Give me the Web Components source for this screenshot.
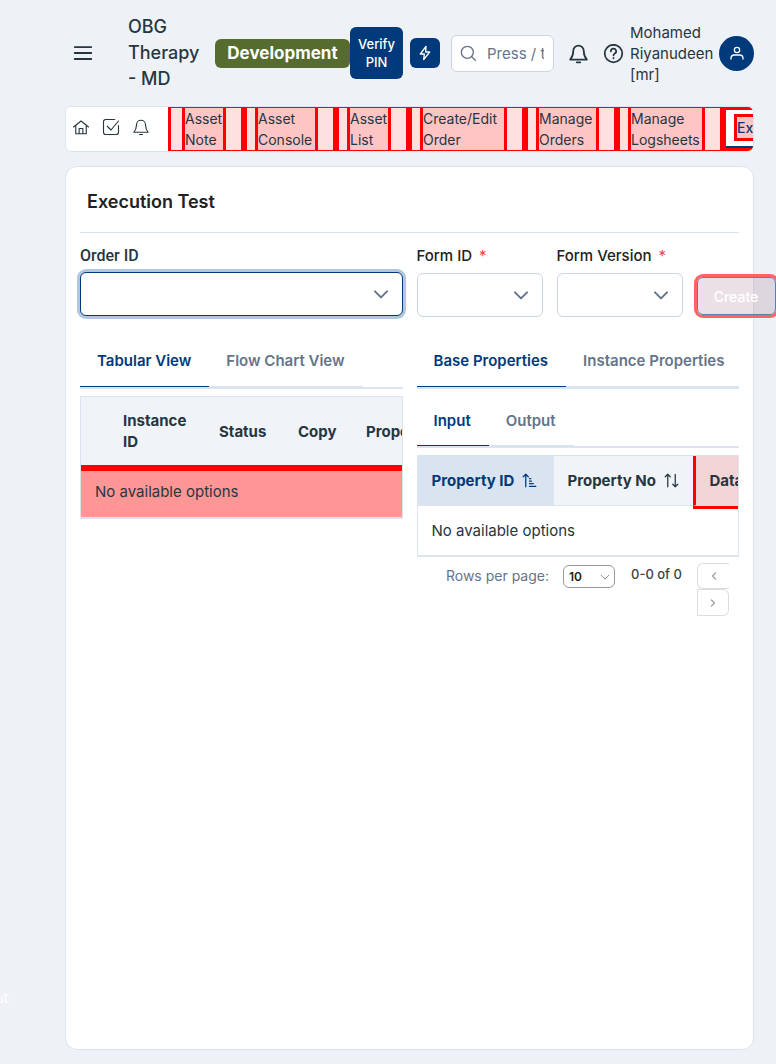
<!DOCTYPE html>
<html lang="en">
<head>
<meta charset="utf-8">
<meta name="viewport" content="width=device-width, initial-scale=1">
<title>Execution Test</title>
<style>
  html, body { margin: 0; }
  body {
    background: #eef2f7;
    color: #263640;
    font: 14px/21px Inter, "Open Sans", sans-serif;
    overflow-x: hidden;
  }
</style>
</head>
<body>
<app-shell>
  <side-drawer slot="drawer"></side-drawer>
  <app-header slot="header" app-title="OBG Therapy - MD" env="Development" user="Mohamed Riyanudeen [mr]"></app-header>
  <nav-bar slot="nav">
    <nav-tab style="--w: 38px" class="first">Asset Note</nav-tab>
    <nav-tab style="--w: 57px">Asset Console</nav-tab>
    <nav-tab style="--w: 38px">Asset List</nav-tab>
    <nav-tab style="--w: 81px">Create/Edit Order</nav-tab>
    <nav-tab style="--w: 57px">Manage Orders</nav-tab>
    <nav-tab style="--w: 71px">Manage Logsheets</nav-tab>
    <nav-tab style="--w: 110px" active>Execution Test</nav-tab>
  </nav-bar>
  <page-card heading="Execution Test">
    <div slot="left">
      <field-select label="Order ID" plain focused></field-select>
    </div>
    <form-row slot="right"></form-row>
    <div slot="left-body">
      <tab-strip tabs="Tabular View|Flow Chart View"></tab-strip>
      <instance-table></instance-table>
    </div>
    <div slot="right-body">
      <tab-strip tabs="Base Properties|Instance Properties"></tab-strip>
      <tab-strip tabs="Input|Output" compact></tab-strip>
      <property-table></property-table>
      <page-controls></page-controls>
    </div>
  </page-card>
</app-shell>

<script>
const ICONS = {
  menu: '<path d="M3 5.500h18M3 12h18M3 18.500h18"/>',
  home: '<path d="M2 12 12 4l10 8M5 10v11h14V10M9.500 21v-7h5v7"/>',
  check: '<path d="M22 10v9a3 3 0 0 1-3 3H5a3 3 0 0 1-3-3V5a3 3 0 0 1 3-3h12M7 11l5 5L22 4"/>',
  bell: '<path d="M12 3a6 6 0 0 0-6 6c0 5-1.500 7.500-3.500 10h19C19.500 16.500 18 14 18 9a6 6 0 0 0-6-6zM10 22h4"/>',
  bolt: '<path d="M13.500 2 5 13.500h6L10 22l9-11.500h-6z"/>',
  search: '<circle cx="11" cy="11" r="9"/><path d="m18 18 5 5"/>',
  help: '<circle cx="12" cy="12" r="10"/><path d="M9 9.500a3 3 0 1 1 4.500 2.500c-1 .6-1.500 1-1.500 2M12 17v.5"/>',
  user: '<circle cx="12" cy="7.500" r="4"/><path d="M3 21v-1c0-3 2-5 5-5h8c3 0 5 2 5 5v1"/>',
  down: '<path d="m3 8 9 9 9-9"/>',
  left: '<path d="m15 6-6 6 6 6"/>',
  right: '<path d="m9 6 6 6-6 6"/>',
  sort: '<path d="M6 22V2M2 6l4-4 4 4M18 2v20M14 18l4 4 4-4"/>',
  sorted: '<path d="M6 22V2M2 6l4-4 4 4M12 9h2M12 13h3M12 17h6M12 21.500h10"/>'
};

// base class: every element renders its markup into an open shadow root
class BaseElement extends HTMLElement {
  constructor() {
    super();
    this.attachShadow({ mode: 'open' });
  }
  connectedCallback() {
    this.shadowRoot.innerHTML = `<style>
      *, :host { box-sizing: border-box; }
      :host { display: block; }
      button, input, select { font: inherit; color: inherit; margin: 0; }
    </style>` + this.render();
  }
}

customElements.define('ui-icon', class extends BaseElement {
  render() {
    return `
      <style>
        :host { display: block; flex: none; width: var(--size, 20px); height: var(--size, 20px); }
        svg { display: block; width: 100%; height: 100%; fill: none; stroke: currentColor; stroke-linecap: round; stroke-linejoin: round; stroke-width: var(--stroke, 2); }
      </style>
      <svg viewBox="0 0 24 24" aria-hidden="true">${ICONS[this.getAttribute('name')]}</svg>`;
  }
});

customElements.define('app-shell', class extends BaseElement {
  render() {
    return `
      <style>
        :host { display: flex; flex-direction: column; min-height: 100vh; padding: 0 22px 14px 65px; position: relative; overflow: hidden; }
        .nav { margin-bottom: 14px; }
        .page { flex: 1; display: grid; }
      </style>
      <slot name="drawer"></slot>
      <slot name="header"></slot>
      <div class="nav"><slot name="nav"></slot></div>
      <main class="page"><slot></slot></main>`;
  }
});

// collapsed drawer, only its right edge is on screen
customElements.define('side-drawer', class extends BaseElement {
  render() {
    return `
      <style>
        :host { position: absolute; right: 100%; bottom: 55px; margin-right: -8px; }
        a { color: #fff; text-decoration: none; font-size: 13px; }
      </style>
      <a href="#">Logout</a>`;
  }
});

customElements.define('app-header', class extends BaseElement {
  render() {
    return `
      <style>
        :host { display: flex; align-items: center; height: 106px; font-size: 15px; }
        button { border: 0; padding: 0; background: none; display: grid; place-items: center; flex: none; }
        .menu { width: 36px; height: 36px; margin-right: 27px; }
        h1 { flex: none; width: 73px; margin: 0 14px 0 0; font-size: 18px; line-height: 26px; font-weight: 500; }
        .env { flex: none; width: 135px; background: #556b2f; color: #fff; border-radius: 6px; text-align: center; font-size: 17px; font-weight: 700; line-height: 29px; }
        .pin { width: 53px; height: 52px; background: #003a7a; color: #fff; border-radius: 6px; font-size: 13px; font-weight: 500; line-height: 18px; }
        .bolt { width: 30px; height: 30px; margin: 0 11px 0 7px; background: #003a7a; color: #fff; border-radius: 6px; }
        .search { flex: 1; min-width: 0; display: flex; align-items: center; height: 37px; padding: 0 9px 0 8px; border: 1px solid #cbd5e1; border-radius: 6px; background: #fff; color: #64748b; }
        input { flex: 1; min-width: 0; width: 0; padding: 0; margin-left: 11px; border: 0; background: none; outline: 0; }
        input::placeholder { color: #64748b; opacity: 1; }
        .bell { margin-left: 14px; }
        .help { margin-left: 14px; }
        .user { flex: none; width: 82px; margin: 0 7px 0 6px; }
        .avatar { width: 35px; height: 35px; border-radius: 50%; background: #003a7a; color: #fff; }
      </style>
      <button class="menu" aria-label="Menu"><ui-icon name="menu" style="--size: 22px"></ui-icon></button>
      <h1>${this.getAttribute('app-title')}</h1>
      <span class="env">${this.getAttribute('env')}</span>
      <button class="pin">Verify<br>PIN</button>
      <button class="bolt" aria-label="Quick actions"><ui-icon name="bolt" style="--size: 16px"></ui-icon></button>
      <label class="search">
        <ui-icon name="search" style="--size: 16px"></ui-icon>
        <input type="text" aria-label="Search" placeholder="Press / to search">
      </label>
      <button class="bell" aria-label="Notifications"><ui-icon name="bell" style="--size: 21px"></ui-icon></button>
      <button class="help" aria-label="Help"><ui-icon name="help" style="--size: 21px"></ui-icon></button>
      <span class="user">${this.getAttribute('user')}</span>
      <button class="avatar" aria-label="Account"><ui-icon name="user" style="--size: 16px"></ui-icon></button>`;
  }
});

customElements.define('nav-bar', class extends BaseElement {
  render() {
    return `
      <style>
        :host { display: flex; height: 46px; border: 1px solid #dce5ef; border-radius: 6px; background: #fff; overflow: hidden; }
        .icons { flex: none; display: flex; gap: 12px; padding: 11px 18px 0 6px; }
        button { border: 0; padding: 0; width: 18px; height: 18px; background: none; }
        .tabs { display: flex; align-items: center; flex: 1; min-width: 0; overflow: hidden; }
      </style>
      <div class="icons">
        <button aria-label="Home"><ui-icon name="home" style="--size: 18px; --stroke: 1.500"></ui-icon></button>
        <button aria-label="Tasks"><ui-icon name="check" style="--size: 18px; --stroke: 1.500"></ui-icon></button>
        <button aria-label="Alerts"><ui-icon name="bell" style="--size: 18px; --stroke: 1.500"></ui-icon></button>
      </div>
      <nav class="tabs"><slot></slot></nav>`;
  }
});

customElements.define('nav-tab', class extends BaseElement {
  render() {
    return `
      <style>
        :host { flex: none; display: block; height: 44px; padding: 0 15px 0 8px; border: solid #f00; border-width: 1px 3px; background: #ffe0e0; }
        :host(.first) { padding-left: 11px; }
        a { display: block; box-sizing: content-box; width: var(--w); height: 42px; border: solid #f00; border-width: 0 3px; background: #ffc5c5; color: inherit; text-decoration: none; }
        :host([active]) { padding-top: 4px; border-width: 3px; background: linear-gradient(#003a7a, #003a7a) 0 100% / 100% 2px no-repeat #fff; }
        :host([active]) a { height: 21px; border-width: 3px; color: #003a7a; font-weight: 500; }
      </style>
      <a href="#"><slot></slot></a>`;
  }
});

customElements.define('page-card', class extends BaseElement {
  render() {
    return `
      <style>
        :host { border: 1px solid #dce5ef; border-radius: 12px; background: #fff; padding: 14px; min-width: 0; }
        h2 { margin: 0; padding: 8px 7px 17px; border-bottom: 1px solid #dce5ef; font-size: 18px; line-height: 26px; font-weight: 600; color: #212121; }
        .grid { display: grid; grid-template-columns: minmax(0, 1fr) minmax(0, 1fr); column-gap: 14px; row-gap: 18px; padding-top: 12px; }
        ::slotted(*) { min-width: 0; }
      </style>
      <h2>${this.getAttribute('heading')}</h2>
      <div class="grid">
        <slot name="left"></slot>
        <slot name="right"></slot>
        <slot name="left-body"></slot>
        <slot name="right-body"></slot>
      </div>`;
  }
});

customElements.define('field-select', class extends BaseElement {
  render() {
    const required = this.hasAttribute('required') ? '<span class="req">*</span>' : '';
    return `
      <style>
        :host { min-width: 0; }
        label { display: block; height: 21px; margin-bottom: 7px; font-size: 15px; font-weight: 500; color: #212121; white-space: nowrap; }
        :host([plain]) label { font: 500 16px/21px Roboto, sans-serif; color: #263640; margin-bottom: 6px; }
        .req { color: #f44336; margin-left: 7px; font-weight: 400; }
        .box { display: grid; align-items: center; height: 44px; color: #64748b; }
        select, ui-icon { grid-area: 1 / 1; }
        select { width: 100%; height: 44px; padding: 0 30px 0 12px; appearance: none; background: #fff; border: 1px solid #cbd5e1; border-radius: 6px; outline: 0; }
        ui-icon { justify-self: end; margin-right: 14px; pointer-events: none; z-index: 1; }
        :host([focused]) select { border-color: #003a7a; box-shadow: 0 0 0 3px #b2c7de; }
      </style>
      <label for="field">${this.getAttribute('label')}${required}</label>
      <div class="box">
        <select id="field"><option></option></select>
        <ui-icon name="down" style="--size: 16px; --stroke: 3"></ui-icon>
      </div>`;
  }
});

customElements.define('form-row', class extends BaseElement {
  render() {
    return `
      <style>
        :host { display: flex; gap: 14px; align-items: flex-start; }
        field-select { flex: none; width: 126px; }
        button { flex: none; width: 79px; height: 38px; margin-top: 32px; padding: 0; border: 1px solid #5781ab; border-radius: 6px; background: rgba(174, 134, 154, .26); box-shadow: 0 0 0 3px #ff6464; color: #fff; font-weight: 500; }
      </style>
      <field-select label="Form ID" required></field-select>
      <field-select label="Form Version" required></field-select>
      <button disabled>Create</button>`;
  }
});

customElements.define('tab-strip', class extends BaseElement {
  render() {
    const tabs = this.getAttribute('tabs').split('|');
    return `
      <style>
        :host { height: 54px; border-bottom: 2px solid #dae4f0; margin-bottom: 7px; overflow: hidden; }
        :host([compact]) { height: 52px; }
        .list { display: flex; }
        button { flex: none; padding: 0 18px 0 17px; height: 52px; border: 0; border-bottom: 1px solid #dae4f0; background: none; color: #64748b; font-size: 15px; font-weight: 600; }
        :host([compact]) button { height: 50px; }
        button[aria-selected=true] { color: #003a7a; border-bottom-color: #003a7a; }
      </style>
      <div class="list" role="tablist">
        ${tabs.map((tab, i) => `<button role="tab" aria-selected="${i === 0}">${tab}</button>`).join('')}
      </div>`;
  }
});

const TABLE_CSS = `
  :host { border: 1px solid #dce5ef; border-bottom-width: 2px; overflow: hidden; }
  table { table-layout: fixed; border-collapse: separate; border-spacing: 0; font-size: 15px; }
  th, td { padding: 0 14px; text-align: left; }
  th { background: #f0f4f9; font-weight: 700; }
`;

customElements.define('instance-table', class extends BaseElement {
  render() {
    return `
      <style>
        ${TABLE_CSS}
        table { width: 400px; }
        th { height: 68px; }
        td { height: 52px; padding-bottom: 5px; border-top: 6px solid #f00; background: #ff9696; }
      </style>
      <table>
        <colgroup><col style="width: 28px"><col style="width: 96px"><col style="width: 79px"><col style="width: 68px"><col></colgroup>
        <thead><tr><th></th><th>Instance ID</th><th>Status</th><th>Copy</th><th>Properties</th></tr></thead>
        <tbody><tr><td colspan="5">No available options</td></tr></tbody>
      </table>`;
  }
});

customElements.define('property-table', class extends BaseElement {
  render() {
    return `
      <style>
        ${TABLE_CSS}
        table { width: 420px; }
        th { height: 50px; border-bottom: 1px solid #dce5ef; white-space: nowrap; }
        td { height: 49px; }
        th div { display: flex; align-items: center; gap: 8px; }
        .sorted { background: #dae4f0; color: #003a7a; border-bottom-color: #dae4f0; }
        .marked { background: #f3d5d8; border-left: 3px solid #f00; border-bottom-color: #f3d5d8; box-shadow: 0 3px 0 #f00; }
      </style>
      <table>
        <colgroup><col style="width: 136px"><col style="width: 139px"><col></colgroup>
        <thead><tr>
          <th class="sorted" aria-sort="ascending"><div>Property ID <ui-icon name="sorted" style="--size: 15px"></ui-icon></div></th>
          <th><div>Property No <ui-icon name="sort" style="--size: 15px"></ui-icon></div></th>
          <th class="marked">Data Type</th>
        </tr></thead>
        <tbody><tr><td colspan="3">No available options</td></tr></tbody>
      </table>`;
  }
});

customElements.define('page-controls', class extends BaseElement {
  render() {
    return `
      <style>
        :host { display: flex; justify-content: flex-end; padding: 6px 10px 0 0; }
        label { margin: 2px 14px 0 0; color: #64748b; }
        .size { display: grid; align-items: center; align-self: flex-start; width: 52px; margin: 2px 16px 0 0; }
        select, .size ui-icon { grid-area: 1 / 1; }
        select { height: 23px; padding: 0 5px; appearance: none; border: 1px solid #999; border-radius: 6px; background: #fff; color: #212121; font-size: 12px; font-weight: 600; }
        .size ui-icon { justify-self: end; margin-right: 5px; pointer-events: none; z-index: 1; color: #777; }
        .range { width: 50px; margin: 1px 16px 0 0; font-size: 13px; font-weight: 500; white-space: nowrap; color: #424242; }
        .buttons { display: grid; }
        button { display: grid; place-items: center; width: 32px; height: 27px; padding: 0; border: 1px solid #dcdcdc; border-radius: 6px 0 0 6px; background: none; color: #a6a6a6; }
        button:first-child { height: 26px; border-right: 0; }
        button:last-child { border-radius: 0 6px 6px 0; }
      </style>
      <label for="rows">Rows per page:</label>
      <div class="size">
        <select id="rows"><option>10</option></select>
        <ui-icon name="down" style="--size: 10px"></ui-icon>
      </div>
      <span class="range">0-0 of 0</span>
      <div class="buttons">
        <button aria-label="Previous page" disabled><ui-icon name="left" style="--size: 12px; --stroke: 3"></ui-icon></button>
        <button aria-label="Next page" disabled><ui-icon name="right" style="--size: 12px; --stroke: 3"></ui-icon></button>
      </div>`;
  }
});
</script>
</body>
</html>
